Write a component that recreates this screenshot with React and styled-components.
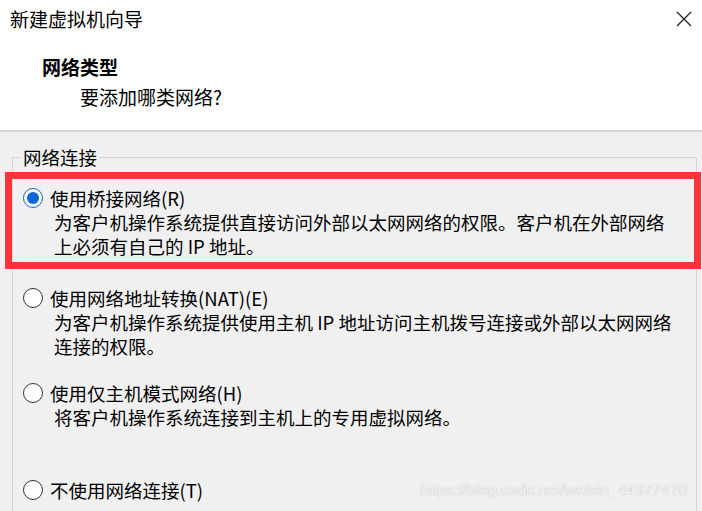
import React from 'react'
import styled, { createGlobalStyle } from 'styled-components'

const GlobalStyle = createGlobalStyle`
body{
  margin:0;
  background:#f0f0f0;
  font-family:"Noto Sans CJK SC","Noto Sans",sans-serif;
  color:#000;
}
`

const Dialog = styled.div`
width:702px;
height:511px;
overflow:hidden;
position:relative;
background:#f0f0f0;
`

const Header = styled.div`
height:132px;
background:#fff;
border-bottom:2px solid #d4d4d4;
box-sizing:border-box;
`

const TitleBar = styled.div`
display:flex;
align-items:center;
justify-content:space-between;
padding:8px 10px 0 10px;
height:22px;
`

const Title = styled.div`
font-size:19px;
line-height:22px;
`

const Close = styled.div`
width:16px;
height:16px;
margin-right:0;
display:flex;
`

const Heading = styled.div`
margin:26px 0 0 42px;
font-size:19px;
line-height:22px;
font-weight:700;
`

const SubHeading = styled.div`
margin:8px 0 0 80px;
font-size:19px;
line-height:22px;
`

const Body = styled.div`
padding-top:14px;
`

const Group = styled.fieldset`
margin:0 5px 0 12px;
padding:4px 0 0 0;
border:1px solid #d6d6d6;
border-bottom:none;
min-height:400px;
`

const Legend = styled.legend`
margin-left:8px;
padding:0 2px;
font-size:18.5px;
line-height:22px;
`

const Highlight = styled.div`
margin:0 -5px 0 -8px;
border:7px solid #f9353b;
padding:8px 0 5px 11px;
`

const Option = styled.div`
margin-top:${p => p.$top || 0}px;
padding-left:${p => p.$inset || 10}px;
`

const Row = styled.div`
display:flex;
align-items:center;
gap:7px;
font-size:18.5px;
line-height:22px;
`

const Radio = styled.span`
width:20px;
height:20px;
box-sizing:border-box;
border-radius:50%;
border:1.5px solid ${p => (p.$checked ? '#0a66d8' : '#333')};
background:#fff;
display:flex;
align-items:center;
justify-content:center;
flex:none;
&::after{
  content:"";
  width:12px;
  height:12px;
  border-radius:50%;
  background:${p => (p.$checked ? '#0a66d8' : 'transparent')};
}
`

const Desc = styled.div`
margin:2px 0 0 31px;
font-size:18.5px;
line-height:22px;
`

const Watermark = styled.div`
position:absolute;
left:420px;
top:481px;
font-family:"Liberation Sans",Arial,sans-serif;
font-size:15.5px;
color:rgba(255,255,255,0.9);
text-shadow:0 0 1px rgba(0,0,0,0.35);
letter-spacing:0.1px;
`

const options = [
  {
    label: '使用网络地址转换(NAT)(E)',
    desc: ['为客户机操作系统提供使用主机 IP 地址访问主机拨号连接或外部以太网网络', '连接的权限。'],
    top: 18,
  },
  {
    label: '使用仅主机模式网络(H)',
    desc: ['将客户机操作系统连接到主机上的专用虚拟网络。'],
    top: 25,
  },
  {
    label: '不使用网络连接(T)',
    desc: [],
    top: 51,
  },
]

export default function App() {
  return (
    <>
      <GlobalStyle />
      <Dialog>
        <Header>
          <TitleBar>
            <Title>新建虚拟机向导</Title>
            <Close>
              <svg width="16" height="16" viewBox="0 0 16 16">
                <path d="M1 1L15 15M15 1L1 15" stroke="#222" strokeWidth="1.3" fill="none" />
              </svg>
            </Close>
          </TitleBar>
          <Heading>网络类型</Heading>
          <SubHeading>要添加哪类网络?</SubHeading>
        </Header>
        <Body>
          <Group>
            <Legend>网络连接</Legend>
            <Highlight>
              <Row>
                <Radio $checked />
                <span>使用桥接网络(R)</span>
              </Row>
              <Desc>为客户机操作系统提供直接访问外部以太网网络的权限。客户机在外部网络</Desc>
              <Desc>上必须有自己的 IP 地址。</Desc>
            </Highlight>
            {options.map(o => (
              <Option key={o.label} $top={o.top}>
                <Row>
                  <Radio />
                  <span>{o.label}</span>
                </Row>
                {o.desc.map(d => (
                  <Desc key={d}>{d}</Desc>
                ))}
              </Option>
            ))}
          </Group>
        </Body>
        <Watermark>https://blog.csdn.net/weixin_44377470</Watermark>
      </Dialog>
    </>
  )
}
